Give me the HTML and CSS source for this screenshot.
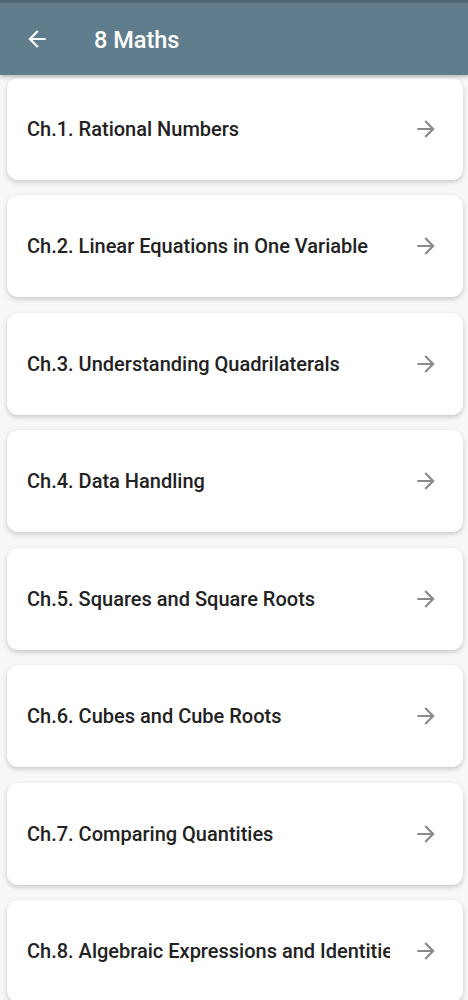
FILE: index.html
```html
<!DOCTYPE html>
<html>
<head>
    <title>8 Maths</title>
    <link rel="stylesheet" href="styles.css">
</head>
<body>

    <div class="topbar">
        <svg class="back" viewBox="0 0 24 24"><path d="M20 11H7.83l5.59-5.59L12 4l-8 8 8 8 1.41-1.41L7.83 13H20v-2z"/></svg>
        <span class="title">8 Maths</span>
    </div>

    <div class="list">
        <div class="chapter">
            <span class="name">Ch.1. Rational Numbers</span>
            <svg class="go" viewBox="0 0 24 24"><path d="M12 4l-1.41 1.41L16.17 11H4v2h12.17l-5.58 5.59L12 20l8-8z"/></svg>
        </div>
        <div class="chapter">
            <span class="name">Ch.2. Linear Equations in One Variable</span>
            <svg class="go" viewBox="0 0 24 24"><path d="M12 4l-1.41 1.41L16.17 11H4v2h12.17l-5.58 5.59L12 20l8-8z"/></svg>
        </div>
        <div class="chapter">
            <span class="name">Ch.3. Understanding Quadrilaterals</span>
            <svg class="go" viewBox="0 0 24 24"><path d="M12 4l-1.41 1.41L16.17 11H4v2h12.17l-5.58 5.59L12 20l8-8z"/></svg>
        </div>
        <div class="chapter">
            <span class="name">Ch.4. Data Handling</span>
            <svg class="go" viewBox="0 0 24 24"><path d="M12 4l-1.41 1.41L16.17 11H4v2h12.17l-5.58 5.59L12 20l8-8z"/></svg>
        </div>
        <div class="chapter">
            <span class="name">Ch.5. Squares and Square Roots</span>
            <svg class="go" viewBox="0 0 24 24"><path d="M12 4l-1.41 1.41L16.17 11H4v2h12.17l-5.58 5.59L12 20l8-8z"/></svg>
        </div>
        <div class="chapter">
            <span class="name">Ch.6. Cubes and Cube Roots</span>
            <svg class="go" viewBox="0 0 24 24"><path d="M12 4l-1.41 1.41L16.17 11H4v2h12.17l-5.58 5.59L12 20l8-8z"/></svg>
        </div>
        <div class="chapter">
            <span class="name">Ch.7. Comparing Quantities</span>
            <svg class="go" viewBox="0 0 24 24"><path d="M12 4l-1.41 1.41L16.17 11H4v2h12.17l-5.58 5.59L12 20l8-8z"/></svg>
        </div>
        <div class="chapter">
            <span class="name">Ch.8. Algebraic Expressions and Identities</span>
            <svg class="go" viewBox="0 0 24 24"><path d="M12 4l-1.41 1.41L16.17 11H4v2h12.17l-5.58 5.59L12 20l8-8z"/></svg>
        </div>
    </div>

</body>
</html>
```

FILE: styles.css
```css
body {
    margin: 0;
    font-family: Roboto, "Noto Sans", sans-serif;
    background-color: #f7f7f7;
    overflow: hidden;
}

.topbar {
    height: 72px;
    border-top: 3px solid #4e6676;
    background-color: #607d8e;
    display: flex;
    align-items: center;
    padding-left: 24px;
    box-shadow: 0 2px 4px rgba(0, 0, 0, 0.25);
    position: relative;
    z-index: 1;
}

.back {
    width: 26px;
    height: 26px;
    fill: #fff;
}

.title {
    margin-left: 44px;
    margin-top: 2px;
    color: #fff;
    font-size: 23.5px;
    font-weight: 500;
}

.list {
    padding: 2.5px 5px 0 7px;
    display: flex;
    flex-direction: column;
    gap: 15.5px;
}

.chapter {
    height: 102px;
    background-color: #fff;
    border-radius: 11px;
    box-shadow: 0 2px 5px rgba(0, 0, 0, 0.2);
    display: flex;
    align-items: center;
    padding: 0 24px 0 20px;
}

.name {
    flex: 1;
    font-size: 20px;
    font-weight: 500;
    color: #222;
    white-space: nowrap;
    overflow: hidden;
    margin-right: 23px;
}

.go {
    width: 26px;
    height: 26px;
    fill: #8a8a8a;
    flex-shrink: 0;
}
```
